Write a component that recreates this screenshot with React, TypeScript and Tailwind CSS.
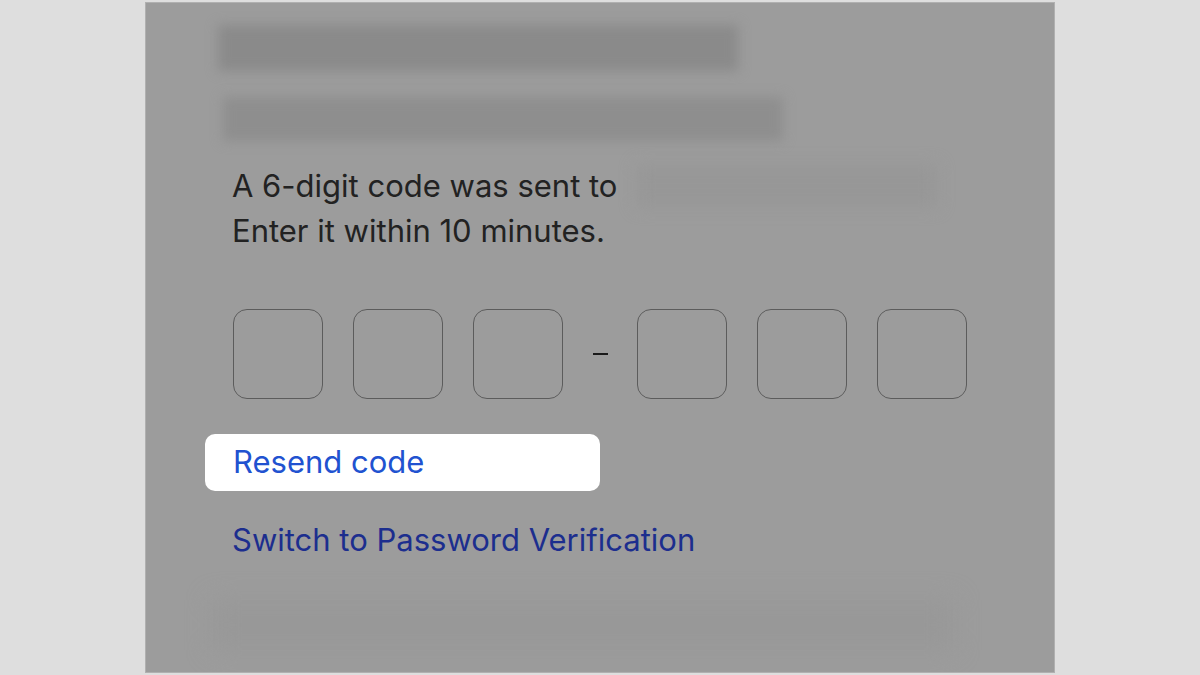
export default function App() {
	return (
		<div className="w-[1200px] h-[675px] bg-[#dedede] flex justify-center items-start overflow-hidden" style={{ fontFamily: "Inter, 'Liberation Sans', sans-serif" }}>
			<div className="mt-[2px] w-[910px] h-[671px] bg-[#9c9c9c] border border-[#b0b0b0] overflow-hidden flex flex-col pl-[87px]">
				{/* blurred header lines */}
				<div className="mt-[22px] -ml-[15px] w-[520px] h-[46px] bg-[#8a8a8a] blur-[6px]" />
				<div className="mt-[26px] -ml-[10px] w-[560px] h-[44px] bg-[#8e8e8e] blur-[6px]" />

				<div className="mt-[22px] -ml-[1px] relative text-[31px] leading-[45px] text-[#222222]">
					<div>A 6-digit code was sent to</div>
					<div>Enter it within 10 minutes.</div>
					<div className="absolute left-[405px] top-[2px] w-[300px] h-[42px] bg-[#979797] blur-[8px]" />
				</div>

				<div className="mt-[56px] flex items-center">
					<div className="flex gap-[30px]">
						<div className="w-[90px] h-[90px] rounded-[14px] border border-[#5c5c5c]" />
						<div className="w-[90px] h-[90px] rounded-[14px] border border-[#5c5c5c]" />
						<div className="w-[90px] h-[90px] rounded-[14px] border border-[#5c5c5c]" />
					</div>
					<div className="w-[74px] flex justify-center">
						<div className="w-[15px] h-[2px] bg-[#1a1a1a]" />
					</div>
					<div className="flex gap-[30px]">
						<div className="w-[90px] h-[90px] rounded-[14px] border border-[#5c5c5c]" />
						<div className="w-[90px] h-[90px] rounded-[14px] border border-[#5c5c5c]" />
						<div className="w-[90px] h-[90px] rounded-[14px] border border-[#5c5c5c]" />
					</div>
				</div>

				<div className="mt-[35px] -ml-[28px] w-[395px] h-[57px] bg-white rounded-[10px] flex items-center pl-[28px]">
					<span className="text-[31px] text-[#2152d0]">Resend code</span>
				</div>

				<div className="mt-[29px] -ml-[1px] text-[31px] leading-[40px] text-[#1c2e8e]">
					Switch to Password Verification
				</div>

				<div className="mt-[40px] -ml-[20px] w-[740px] h-[50px] bg-[#989898] blur-[12px]" />
			</div>
		</div>
	);
}
